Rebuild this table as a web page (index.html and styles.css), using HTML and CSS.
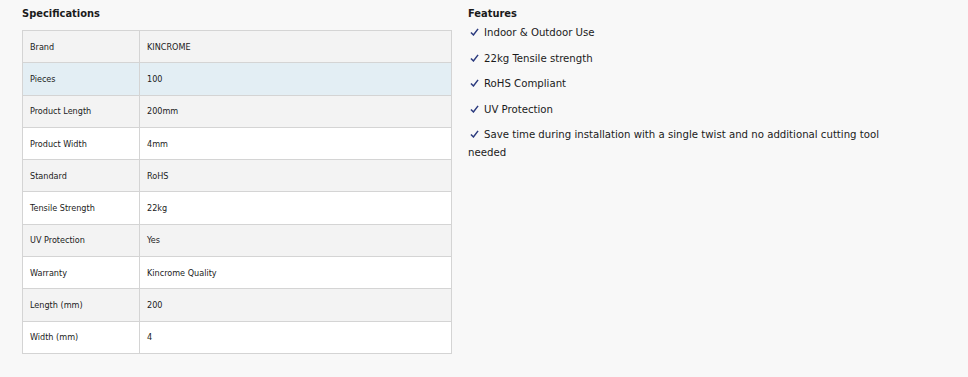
FILE: index.html
```html
<!DOCTYPE html>
<html lang="en">

<head>
    <meta charset="UTF-8">
    <meta name="viewport" content="width=device-width, initial-scale=1.0">
    <title>Product Details</title>
    <link rel="stylesheet" href="styles.css">
</head>

<body>
    <!-- Detalhes do produto -->
    <div class="details">
        <!-- Especificações -->
        <section class="specs">
            <h3>Specifications</h3>
            <table class="spec-table">
                <tr><td>Brand</td><td>KINCROME</td></tr>
                <tr class="active"><td>Pieces</td><td>100</td></tr>
                <tr><td>Product Length</td><td>200mm</td></tr>
                <tr><td>Product Width</td><td>4mm</td></tr>
                <tr><td>Standard</td><td>RoHS</td></tr>
                <tr><td>Tensile Strength</td><td>22kg</td></tr>
                <tr><td>UV Protection</td><td>Yes</td></tr>
                <tr><td>Warranty</td><td>Kincrome Quality</td></tr>
                <tr><td>Length (mm)</td><td>200</td></tr>
                <tr><td>Width (mm)</td><td>4</td></tr>
            </table>
        </section>

        <!-- Características -->
        <section class="features">
            <h3>Features</h3>
            <ul>
                <li><svg class="tick" viewBox="0 0 10 9"><path d="M1 5 L3.8 7.8 L9 1"/></svg>Indoor &amp; Outdoor Use</li>
                <li><svg class="tick" viewBox="0 0 10 9"><path d="M1 5 L3.8 7.8 L9 1"/></svg>22kg Tensile strength</li>
                <li><svg class="tick" viewBox="0 0 10 9"><path d="M1 5 L3.8 7.8 L9 1"/></svg>RoHS Compliant</li>
                <li><svg class="tick" viewBox="0 0 10 9"><path d="M1 5 L3.8 7.8 L9 1"/></svg>UV Protection</li>
                <li><svg class="tick" viewBox="0 0 10 9"><path d="M1 5 L3.8 7.8 L9 1"/></svg>Save time during installation with a single twist and no additional cutting tool needed</li>
            </ul>
        </section>
    </div>
</body>

</html>
```

FILE: styles.css
```css
/* Reset */
* {
    margin: 0;
    padding: 0;
    box-sizing: border-box;
}

body {
    background-color: #f8f8f8;
    color: #1b1b1b;
    font-family: 'DejaVu Sans Condensed', 'Liberation Sans', sans-serif;
}

/* Layout em duas colunas */
.details {
    display: flex;
    gap: 16px;
    padding: 6px 22px 0;
}

.specs {
    width: 430px;
    flex-shrink: 0;
}

.features {
    width: 420px;
}

h3 {
    font-size: 11px;
    font-weight: bold;
    line-height: 16px;
}

.specs h3 {
    margin-bottom: 8px;
}

/* Tabela de especificações */
.spec-table {
    width: 100%;
    border-collapse: collapse;
    font-size: 9px;
}

.spec-table tr {
    height: 32.3px;
    background-color: #fff;
}

.spec-table tr:nth-child(odd) {
    background-color: #f3f3f3;
}

.spec-table tr.active {
    background-color: #e3eef4;
}

.spec-table td {
    border: 1px solid #d4d4d4;
    padding: 0 7px;
    vertical-align: middle;
}

.spec-table td:first-child {
    width: 117px;
}

/* Lista de características */
.features h3 {
    margin-bottom: 2px;
}

.features ul {
    list-style: none;
    font-size: 11.3px;
    line-height: 18px;
}

.features li {
    margin-bottom: 7.5px;
}

.tick {
    width: 9px;
    height: 8px;
    margin: 0 5px 0 2px;
    fill: none;
    stroke: #2b3a7e;
    stroke-width: 1.7;
    vertical-align: 0;
}
```
